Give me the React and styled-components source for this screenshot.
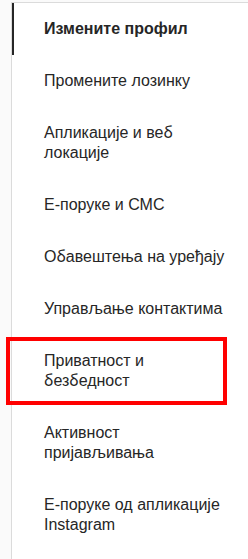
import React from "react";
import styled, { createGlobalStyle } from "styled-components";

const Global = createGlobalStyle`
  html, body { margin: 0; padding: 0; background: #fafafa; }
  body { font-family: "Liberation Sans", Arial, sans-serif; }
`;

const Page = styled.div`
  padding-top: 2px;
  padding-left: 11px;
  min-height: 559px;
  box-sizing: border-box;
  display: flex;
`;

const Nav = styled.nav`
  position: relative;
  flex: 1;
  background: #fff;
  border-top: 1px solid #dbdbdb;
  border-left: 1px solid #dbdbdb;
  display: flex;
  flex-direction: column;
`;

const Item = styled.a`
  display: block;
  padding: 16px 16px 16px 30px;
  border-left: 2px solid ${(p) => (p.$active ? "#262626" : "transparent")};
  font-family: "Liberation Sans", Arial, sans-serif;
  font-size: 16px;
  line-height: 20px;
  color: #262626;
  font-weight: ${(p) => (p.$active ? 700 : 400)};
  text-decoration: none;
  position: relative;
`;

/* Serbian localized form of б (the Liberation face has no Serbian variant) */
const SerbianGlyph = styled.span`
  font-family: "Noto Sans", "DejaVu Sans", sans-serif;
  font-size: 15.5px;
  line-height: 1;
`;

const Highlight = styled.span`
  position: absolute;
  left: -8px;
  right: 21px;
  top: 2px;
  bottom: 2px;
  border: 4px solid #ff0000;
  pointer-events: none;
`;

const items = [
  "Измените профил",
  "Промените лозинку",
  "Апликације и веб локације",
  "Е-поруке и СМС",
  "Обавештења на уређају",
  "Управљање контактима",
  "Приватност и безбедност",
  "Активност пријављивања",
  "Е-поруке од апликације Instagram",
];

function SerbianText({ text }) {
  const parts = text.split("б");
  return parts.map((part, i) => (
    <React.Fragment key={i}>
      {part}
      {i < parts.length - 1 && <SerbianGlyph lang="sr">б</SerbianGlyph>}
    </React.Fragment>
  ));
}

export default function App() {
  return (
    <>
      <Global />
      <Page lang="sr">
        <Nav>
          {items.map((t, i) => (
            <Item key={t} $active={i === 0}>
              <SerbianText text={t} />
              {i === 6 && <Highlight />}
            </Item>
          ))}
        </Nav>
      </Page>
    </>
  );
}
